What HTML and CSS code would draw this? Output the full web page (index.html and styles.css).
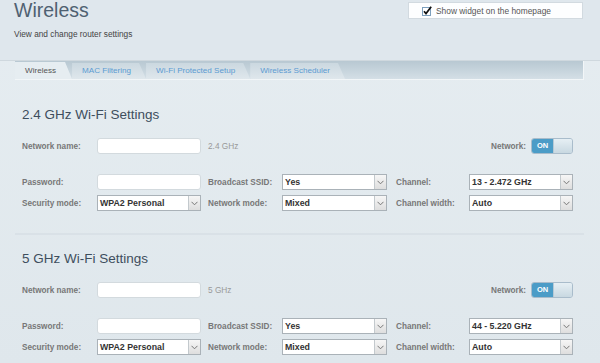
FILE: index.html
```html
<!DOCTYPE html>
<html lang="en">
<head>
  <meta charset="UTF-8">
  <title>Wireless</title>
  <link rel="stylesheet" href="styles.css">
</head>
<body>

  <header class="page-head">
    <div class="title-block">
      <h1>Wireless</h1>
      <p class="subtitle">View and change router settings</p>
    </div>
    <label class="widget-box">
      <svg class="check" width="10" height="10" viewBox="0 0 10 10">
        <rect x="0.5" y="1.5" width="8" height="8" fill="#fff" stroke="#7c9fbd"/>
        <path d="M2 5.2 L4 7.6 L9.2 0.8" fill="none" stroke="#111" stroke-width="1.7"/>
      </svg>
      Show widget on the homepage
    </label>
  </header>

  <nav class="tabs">
    <a class="tab active" href="#">Wireless</a>
    <a class="tab" href="#">MAC Filtering</a>
    <a class="tab" href="#">Wi-Fi Protected Setup</a>
    <a class="tab" href="#">Wireless Scheduler</a>
  </nav>

  <main class="panel">
    <section class="band">
      <h2>2.4 GHz Wi-Fi Settings</h2>
      <div class="row">
        <span class="label">Network name:</span>
        <input class="text-input" type="text">
        <span class="note">2.4 GHz</span>
        <span class="net-label">Network:</span>
        <span class="switch"><span class="switch-on">ON</span><span class="switch-knob"></span></span>
      </div>
      <div class="row row-spaced">
        <span class="label">Password:</span>
        <input class="text-input" type="text">
        <span class="label label-mid">Broadcast SSID:</span>
        <div class="select select-mid"><span class="select-value">Yes</span><span class="select-arrow"><svg width="7" height="5" viewBox="0 0 7 5"><path d="M0.5 0.8 L3.5 3.8 L6.5 0.8" fill="none" stroke="#777" stroke-width="1"/></svg></span></div>
        <span class="label label-right">Channel:</span>
        <div class="select"><span class="select-value">13 - 2.472 GHz</span><span class="select-arrow"><svg width="7" height="5" viewBox="0 0 7 5"><path d="M0.5 0.8 L3.5 3.8 L6.5 0.8" fill="none" stroke="#777" stroke-width="1"/></svg></span></div>
      </div>
      <div class="row row-tight">
        <span class="label">Security mode:</span>
        <div class="select"><span class="select-value">WPA2 Personal</span><span class="select-arrow"><svg width="7" height="5" viewBox="0 0 7 5"><path d="M0.5 0.8 L3.5 3.8 L6.5 0.8" fill="none" stroke="#777" stroke-width="1"/></svg></span></div>
        <span class="label label-mid">Network mode:</span>
        <div class="select select-mid"><span class="select-value">Mixed</span><span class="select-arrow"><svg width="7" height="5" viewBox="0 0 7 5"><path d="M0.5 0.8 L3.5 3.8 L6.5 0.8" fill="none" stroke="#777" stroke-width="1"/></svg></span></div>
        <span class="label label-right">Channel width:</span>
        <div class="select"><span class="select-value">Auto</span><span class="select-arrow"><svg width="7" height="5" viewBox="0 0 7 5"><path d="M0.5 0.8 L3.5 3.8 L6.5 0.8" fill="none" stroke="#777" stroke-width="1"/></svg></span></div>
      </div>
    </section>

    <hr class="divider">

    <section class="band band-second">
      <h2>5 GHz Wi-Fi Settings</h2>
      <div class="row">
        <span class="label">Network name:</span>
        <input class="text-input" type="text">
        <span class="note">5 GHz</span>
        <span class="net-label">Network:</span>
        <span class="switch"><span class="switch-on">ON</span><span class="switch-knob"></span></span>
      </div>
      <div class="row row-spaced">
        <span class="label">Password:</span>
        <input class="text-input" type="text">
        <span class="label label-mid">Broadcast SSID:</span>
        <div class="select select-mid"><span class="select-value">Yes</span><span class="select-arrow"><svg width="7" height="5" viewBox="0 0 7 5"><path d="M0.5 0.8 L3.5 3.8 L6.5 0.8" fill="none" stroke="#777" stroke-width="1"/></svg></span></div>
        <span class="label label-right">Channel:</span>
        <div class="select"><span class="select-value">44 - 5.220 GHz</span><span class="select-arrow"><svg width="7" height="5" viewBox="0 0 7 5"><path d="M0.5 0.8 L3.5 3.8 L6.5 0.8" fill="none" stroke="#777" stroke-width="1"/></svg></span></div>
      </div>
      <div class="row row-tight">
        <span class="label">Security mode:</span>
        <div class="select"><span class="select-value">WPA2 Personal</span><span class="select-arrow"><svg width="7" height="5" viewBox="0 0 7 5"><path d="M0.5 0.8 L3.5 3.8 L6.5 0.8" fill="none" stroke="#777" stroke-width="1"/></svg></span></div>
        <span class="label label-mid">Network mode:</span>
        <div class="select select-mid"><span class="select-value">Mixed</span><span class="select-arrow"><svg width="7" height="5" viewBox="0 0 7 5"><path d="M0.5 0.8 L3.5 3.8 L6.5 0.8" fill="none" stroke="#777" stroke-width="1"/></svg></span></div>
        <span class="label label-right">Channel width:</span>
        <div class="select"><span class="select-value">Auto</span><span class="select-arrow"><svg width="7" height="5" viewBox="0 0 7 5"><path d="M0.5 0.8 L3.5 3.8 L6.5 0.8" fill="none" stroke="#777" stroke-width="1"/></svg></span></div>
      </div>
    </section>
  </main>

</body>
</html>
```

FILE: styles.css
```css
* {
  margin: 0;
  padding: 0;
  box-sizing: border-box;
}
body {
  font-family: "Liberation Sans", Arial, sans-serif;
  background: linear-gradient(#e6edf1, #dfe7ec);
  min-height: 363px;
  color: #333;
}
.page-head {
  height: 61px;
  background-color: #dfe7ed;
  border-bottom: 1px solid #cfd8de;
  padding: 0 17px 0 14px;
  display: flex;
  justify-content: space-between;
  align-items: flex-start;
}
.page-head h1 {
  font-size: 19.5px;
  line-height: 20px;
  font-weight: normal;
  color: #4f6172;
}
.subtitle {
  margin-top: 9px;
  font-size: 8.3px;
  line-height: 10px;
  color: #444;
}
.widget-box {
  margin-top: 2px;
  width: 175px;
  height: 17px;
  background-color: #fdfeff;
  border: 1px solid #d2dae0;
  display: flex;
  align-items: center;
  gap: 4px;
  padding-left: 13px;
  font-size: 8.4px;
  color: #555;
}
.check {
  display: block;
}
.tabs {
  margin: 0 16px 0 15px;
  height: 19px;
  display: flex;
  align-items: flex-end;
  background: linear-gradient(#b8c8d2, #d4dfe6);
  border-bottom: 1px solid #f2f6f8;
  border-right: 1px solid #f2f6f8;
}
.tab {
  height: 16px;
  line-height: 16px;
  padding: 0 15px 0 10px;
  font-size: 8.1px;
  color: #5b9bd2;
  text-decoration: none;
  background: linear-gradient(#cbd8e0, #dfe7ec);
  clip-path: polygon(0 0, calc(100% - 7px) 0, 100% 100%, 0 100%);
}
.tab.active {
  height: 17px;
  line-height: 17px;
  padding-right: 16px;
  background: #e6edf1;
  color: #555;
}
.panel {
  margin: 0 16px 0 15px;
  padding: 0 11px 0 7px;
}
.band {
  padding-top: 27px;
}
.band-second {
  padding-top: 16px;
}
.band h2 {
  font-size: 13.5px;
  line-height: 16px;
  font-weight: normal;
  color: #3e4e5d;
  margin-bottom: 15px;
}
.row {
  display: flex;
  align-items: center;
  height: 16px;
}
.row-spaced {
  margin-top: 20px;
}
.row-tight {
  margin-top: 5px;
}
.label {
  width: 75px;
  font-size: 8.2px;
  font-weight: bold;
  color: #777;
}
.label-mid {
  width: 74px;
  margin-left: 7px;
}
.label-right {
  width: 73px;
  margin-left: 9px;
}
.text-input {
  width: 104px;
  height: 16px;
  background: #fff;
  border: 1px solid #d3dade;
  border-radius: 3px;
}
.note {
  margin-left: 7px;
  font-size: 8.3px;
  color: #999;
}
.net-label {
  margin-left: auto;
  margin-right: 5px;
  font-size: 8.2px;
  font-weight: bold;
  color: #777;
}
.switch {
  width: 42px;
  height: 16px;
  display: flex;
  border: 1px solid #a9bccb;
  border-radius: 3px;
  overflow: hidden;
}
.switch-on {
  width: 21px;
  background-color: #4b9cc7;
  color: #fff;
  font-size: 7.5px;
  font-weight: bold;
  line-height: 14px;
  text-align: center;
}
.switch-knob {
  flex: 1;
  background: linear-gradient(#e6eff4, #c8d8e1);
  border-left: 1px solid #b7c9d5;
}
.select {
  width: 104px;
  height: 16px;
  display: flex;
  background: #fff;
  border: 1px solid #aab2b8;
}
.select-mid {
  width: 105px;
}
.select-value {
  flex: 1;
  padding-left: 2px;
  font-size: 8.8px;
  font-weight: bold;
  line-height: 14px;
  color: #333;
}
.select-arrow {
  width: 12px;
  display: flex;
  align-items: center;
  justify-content: center;
  background: linear-gradient(#f6f6f6, #dedede);
  border-left: 1px solid #c3c9cd;
}
.divider {
  margin-top: 22px;
  margin-left: -7px;
  margin-right: -11px;
  border: none;
  height: 2px;
  background-color: #d9e1e7;
}
```
